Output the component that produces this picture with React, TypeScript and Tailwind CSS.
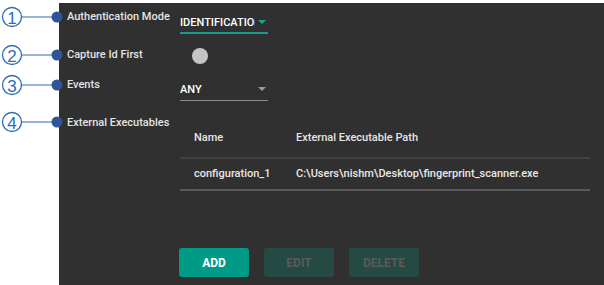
import React from "react";

function Callout({ n, top }: { n: number; top: number }) {
  return (
    <div className="absolute left-0 flex items-center" style={{ top: top - 11 }}>
      <svg width="66" height="22" viewBox="0 0 66 22">
        <circle cx="12" cy="11" r="9.5" fill="white" stroke="#2e6db4" strokeWidth="1.3" />
        <text x="12" y="17.5" textAnchor="middle" fontSize="17" fill="#2e6db4" fontFamily="Liberation Sans, Arial, sans-serif">{n}</text>
        <line x1="21.5" y1="11" x2="54" y2="11" stroke="#2e6db4" strokeWidth="1.2" />
        <circle cx="57" cy="11" r="5.5" fill="#2f5597" />
      </svg>
    </div>
  );
}

export default function App() {
  return (
    <div className="relative w-[604px] h-[285px] bg-white overflow-hidden" style={{ fontFamily: "Roboto, 'Liberation Sans', sans-serif" }}>
      <div className="flex h-full pt-[3px]">
        <div className="w-[59px] shrink-0" />
        <div className="flex-1 bg-[#303030] pl-[8px] pt-[6px] text-[11px] font-medium text-[#e4e4e4]">
          {/* Row 1 */}
          <div className="flex">
            <div className="w-[113px] leading-[16px]">Authentication Mode</div>
            <div className="mt-[6px] w-[88px] border-b-2 border-[#1a9a8a] flex items-center justify-between pb-[1px]">
              <span className="leading-[16px] text-white overflow-hidden whitespace-nowrap w-[75px]">IDENTIFICATION</span>
              <span className="mr-[2px] w-0 h-0 border-l-[4px] border-r-[4px] border-t-[4px] border-l-transparent border-r-transparent border-t-[#1aa596] mb-[3px]" />
            </div>
          </div>
          {/* Row 2 */}
          <div className="flex mt-[13px]">
            <div className="w-[113px] leading-[16px]">Capture Id First</div>
            <div className="pl-[12px] pt-[1px]">
              <div className="w-[16px] h-[16px] rounded-full bg-[#c4c4c4]" />
            </div>
          </div>
          {/* Row 3 */}
          <div className="flex mt-[13px]">
            <div className="w-[113px] leading-[16px]">Events</div>
            <div className="mt-[5px] w-[88px] border-b border-[#8a8a8a] flex items-center justify-between pb-[2px]">
              <span className="leading-[16px] text-white">ANY</span>
              <span className="mr-[2px] w-0 h-0 border-l-[4px] border-r-[4px] border-t-[4px] border-l-transparent border-r-transparent border-t-[#9a9a9a] mb-[3px]" />
            </div>
          </div>
          {/* Row 4 */}
          <div className="flex mt-[14px]">
            <div className="w-[113px] leading-[16px]">External Executables</div>
            <div className="w-[410px]">
              <div className="flex h-[44px] pt-[15px] leading-[16px] border-b-2 border-[#414141]">
                <div className="w-[102px] pl-[14px]">Name</div>
                <div className="pl-[14px]">External Executable Path</div>
              </div>
              <div className="flex h-[32px] pt-[7px] leading-[16px] border-b-2 border-[#5a5a5a] text-[#e8e8e8]">
                <div className="w-[102px] pl-[14px]">configuration_1</div>
                <div className="pl-[14px]">C:\Users\nishm\Desktop\fingerprint_scanner.exe</div>
              </div>
            </div>
          </div>
          {/* Buttons */}
          <div className="flex gap-[15px] ml-[112px] mt-[57px]">
            <div className="w-[70px] h-[29px] rounded-[3px] bg-[#009b86] text-white font-bold text-[12px] flex items-center justify-center">ADD</div>
            <div className="w-[70px] h-[29px] rounded-[3px] bg-[#244a43] text-[#5b5b5b] font-bold text-[12px] flex items-center justify-center">EDIT</div>
            <div className="w-[70px] h-[29px] rounded-[3px] bg-[#244a43] text-[#5b5b5b] font-bold text-[12px] flex items-center justify-center">DELETE</div>
          </div>
        </div>
      </div>
      <Callout n={1} top={17} />
      <Callout n={2} top={55} />
      <Callout n={3} top={85} />
      <Callout n={4} top={122} />
    </div>
  );
}
